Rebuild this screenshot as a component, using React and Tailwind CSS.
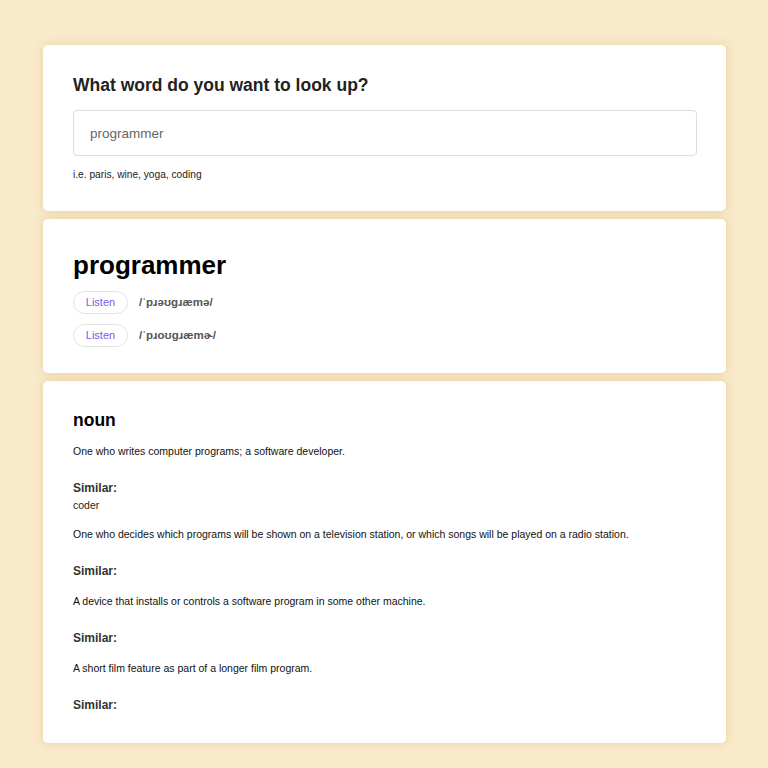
import React from 'react';

const phonetics = ['/ˈpɹəʊɡɹæmə/', '/ˈpɹoʊɡɹæmɚ/'];

const meanings = [
  { def: 'One who writes computer programs; a software developer.', similar: ['coder'] },
  {
    def: 'One who decides which programs will be shown on a television station, or which songs will be played on a radio station.',
    similar: [],
  },
  { def: 'A device that installs or controls a software program in some other machine.', similar: [] },
  { def: 'A short film feature as part of a longer film program.', similar: [] },
];

const card = 'bg-white rounded-[5px] shadow-[0_0_10px_rgba(200,160,90,0.35)] pl-[30px] pr-[29px]';

const App = () => {
  return (
    <div
      className="min-h-[768px] bg-[#f9eacb] pl-[43px] pr-[42px] pt-[45px] pb-6 flex flex-col gap-2"
      style={{ fontFamily: '"Liberation Sans", Arial, sans-serif' }}
    >
      <div className={`${card} pt-[28px] pb-[29px]`}>
        <h2 className="text-[17.5px] leading-[24px] font-bold text-[#222]">What word do you want to look up?</h2>
        <input
          className="mt-[13px] w-full h-[46px] border border-[#dedede] rounded-[4px] px-[16px] text-[13.5px] text-[#666] outline-none"
          defaultValue="programmer"
        />
        <p className="mt-[12px] text-[10.2px] leading-[14px] text-[#222]">i.e. paris, wine, yoga, coding</p>
      </div>

      <div className={`${card} pt-[30px] pb-[26px]`}>
        <h1 className="text-[26px] leading-[32px] font-bold text-black">programmer</h1>
        <div className="mt-[10px] flex flex-col gap-[10px]">
          {phonetics.map((p) => (
            <div key={p} className="flex items-center gap-[11px]">
              <button className="w-[55px] h-[23px] rounded-full border border-[#e2e2e2] text-[11px] text-[#7b5ce6] bg-white">
                Listen
              </button>
              <span className="text-[11.5px] font-bold text-[#555]">{p}</span>
            </div>
          ))}
        </div>
      </div>

      <div className={`${card} pt-[27px] pb-[29px]`}>
        <h3 className="text-[17.5px] leading-[24px] font-bold text-black">noun</h3>
        <div className="mt-[11px] flex flex-col gap-[13px]">
          {meanings.map((m, i) => (
            <div key={i}>
              <p className="text-[10.5px] leading-[16px] text-[#111]">{m.def}</p>
              <h4 className="mt-[20px] text-[12px] leading-[18px] font-bold text-[#333]">Similar:</h4>
              {m.similar.map((s) => (
                <p key={s} className="text-[10.5px] leading-[16px] text-[#222]">{s}</p>
              ))}
            </div>
          ))}
        </div>
      </div>
    </div>
  );
};

export default App;
